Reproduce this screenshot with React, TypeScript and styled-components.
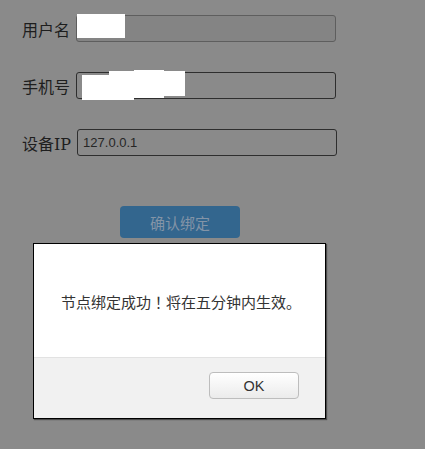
import React from "react";
import styled, { createGlobalStyle } from "styled-components";

const Global = createGlobalStyle`
  html, body { margin: 0; padding: 0; background: #8a8a8a; }
  #root { width: 425px; height: 449px; }
`;

const Page = styled.div`
  position: relative;
  width: 425px;
  height: 449px;
  background: #8a8a8a;
  overflow: hidden;
`;

const Form = styled.div`
  display: flex;
  flex-direction: column;
  gap: 30px;
  padding: 15px 0 0 22px;
`;

const Row = styled.div`
  display: flex;
  align-items: center;
  gap: 6px;
  height: 27px;
`;

const Label = styled.span`
  font-family: "DejaVu Serif", "Noto Sans CJK SC", serif;
  font-size: 16px;
  color: #1e1e1e;
  white-space: nowrap;
`;

const Field = styled.div<{ $disabled?: boolean }>`
  position: relative;
  box-sizing: border-box;
  width: 260px;
  height: 27px;
  border: 1px solid ${(p) => (p.$disabled ? "#5e5e5e" : "#2e2e2e")};
  border-radius: 3px;
  background: ${(p) => (p.$disabled ? "#848484" : "#8a8a8a")};
  display: flex;
  align-items: center;
  padding-left: 5px;
  font-family: "Liberation Sans", "Noto Sans", sans-serif;
  font-size: 13px;
  color: #262626;
`;

const Redact = styled.span<{ $l: number; $t: number; $w: number; $h: number }>`
  position: absolute;
  left: ${(p) => p.$l}px;
  top: ${(p) => p.$t}px;
  width: ${(p) => p.$w}px;
  height: ${(p) => p.$h}px;
  background: #ffffff;
`;

const ButtonRow = styled.div`
  display: flex;
  padding: 50px 0 0 120px;
`;

const Submit = styled.button`
  width: 120px;
  height: 32px;
  border: none;
  border-radius: 4px;
  background: #33668e;
  color: #8394a7;
  font-family: "Noto Sans CJK SC", sans-serif;
  font-size: 15px;
  padding: 0;
`;

const Dialog = styled.div`
  position: absolute;
  left: 33px;
  top: 243px;
  width: 293px;
  height: 176px;
  box-sizing: border-box;
  border: 1px solid #000;
  box-shadow: 1px 1px 1px rgba(0, 0, 0, 0.45);
  background: #fff;
  display: flex;
  flex-direction: column;
`;

const Body = styled.div`
  height: 113px;
  display: flex;
  align-items: center;
  padding-left: 27px;
  font-family: "Noto Sans CJK JP", "Noto Sans CJK SC", sans-serif;
  font-size: 15px;
  color: #333;
  padding-top: 1px;
  box-sizing: border-box;
`;

const Footer = styled.div`
  flex: 1;
  background: #f1f1f1;
  border-top: 1px solid #e2e2e2;
  display: flex;
  justify-content: flex-end;
  align-items: flex-start;
  padding: 14px 26px 0 0;
`;

const OkButton = styled.button`
  width: 90px;
  height: 27px;
  border: 1px solid #bdbdbd;
  border-radius: 4px;
  background: linear-gradient(#ffffff, #ebebeb);
  font-family: "Liberation Sans", "Noto Sans", sans-serif;
  font-size: 14.5px;
  color: #333;
  padding: 0;
`;

export default function App() {
  return (
    <Page>
      <Global />
      <Form>
        <Row>
          <Label>用户名</Label>
          <Field $disabled>
            <Redact $l={0} $t={-2} $w={48} $h={24} />
          </Field>
        </Row>
        <Row>
          <Label>手机号</Label>
          <Field>
            <Redact $l={5} $t={2} $w={27} $h={25} />
            <Redact $l={32} $t={-2} $w={25} $h={29} />
            <Redact $l={57} $t={-3} $w={30} $h={28} />
            <Redact $l={86} $t={-2} $w={22} $h={25} />
          </Field>
        </Row>
        <Row>
          <Label>设备IP</Label>
          <Field>127.0.0.1</Field>
        </Row>
      </Form>
      <ButtonRow>
        <Submit>确认绑定</Submit>
      </ButtonRow>
      <Dialog>
        <Body>节点绑定成功！将在五分钟内生效。</Body>
        <Footer>
          <OkButton>OK</OkButton>
        </Footer>
      </Dialog>
    </Page>
  );
}
